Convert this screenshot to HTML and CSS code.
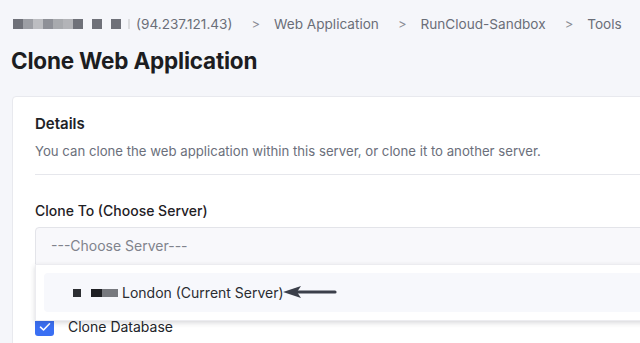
FILE: index.html
```html
<html>
<head>
<link rel="stylesheet" href="styles.css">
</head>
<body>
	<div class="crumbs">
		<span class="redact">
			<i class="px d1"></i><i class="px d2"></i><i class="px d3"></i><i class="px d4"></i><i class="px d5"></i><i class="px d6"></i><i class="px d1"></i>
			<i class="px d1 gap"></i><i class="px d1 gap"></i><i class="px bar"></i>
		</span>
		<span>(94.237.121.43)</span>
		<span class="sep">&gt;</span>
		<span>Web Application</span>
		<span class="sep">&gt;</span>
		<span>RunCloud-Sandbox</span>
		<span class="sep">&gt;</span>
		<span>Tools</span>
	</div>

	<h1>Clone Web Application</h1>

	<div class="card">
		<h2>Details</h2>
		<p class="desc">You can clone the web application within this server, or clone it to another server.</p>
		<hr>

		<label class="field">Clone To (Choose Server)</label>
		<div class="select-wrap">
			<div class="select">---Choose Server---</div>
			<div class="dropdown">
				<div class="option">
					<span class="redact small">
						<i class="px k1"></i><i class="px k2 wide"></i>
					</span>
					<span>London (Current Server)</span>
				</div>
			</div>
			<svg class="pointer" width="56" height="16" viewBox="0 0 56 16">
				<path d="M14 8 H53" stroke="#3b3f4a" stroke-width="3.2" stroke-linecap="round"/>
				<path d="M1 8 L19 2 L15 8 L19 14 Z" fill="#3b3f4a"/>
			</svg>
		</div>

		<div class="check-row">
			<span class="checkbox">
				<svg width="12" height="10" viewBox="0 0 12 10"><path d="M1.5 5.2 L4.5 8 L10.5 1.8" fill="none" stroke="#fff" stroke-width="1.6" stroke-linecap="round" stroke-linejoin="round"/></svg>
			</span>
			<span>Clone Database</span>
		</div>
	</div>
</body>
</html>
```
FILE: styles.css
```css
body {
	margin: 0;
	height: 343px;
	background-color: #f5f6fa;
	font-family: Inter, "Noto Sans", sans-serif;
	color: #1d1f24;
	overflow: hidden;
}

.crumbs {
	display: flex;
	align-items: center;
	padding: 15px 0 0 13px;
	height: 18px;
	font-size: 13.6px;
	color: #6a6e78;
	white-space: nowrap;
}

.crumbs .sep {
	font-size: 13px;
	color: #8a8d95;
	margin: 0 14px 0 19px;
}

.redact {
	display: inline-flex;
	align-items: center;
	margin-right: 6px;
}

.px {
	display: inline-block;
	width: 10px;
	height: 10px;
}

.d1 { background-color: #6f7179; }
.d2 { background-color: #9c9ea4; }
.d3 { background-color: #bcbdc1; }
.d4 { background-color: #8e9097; }
.d5 { background-color: #a8aaae; }
.d6 { background-color: #b3b4b8; }

.gap {
	margin-left: 9px;
}

.bar {
	width: 2px;
	margin-left: 7px;
	background-color: #dcdde0;
}

h1 {
	margin: 14px 0 0 11px;
	font-size: 22.5px;
	font-weight: 700;
	letter-spacing: -0.2px;
	color: #1c1d21;
}

.card {
	margin: 22px -20px 0 12px;
	background-color: #ffffff;
	border: 1px solid #e8e9ee;
	border-radius: 4px;
	padding: 17px 0 0 22px;
	height: 240px;
}

h2 {
	margin: 0;
	font-size: 15px;
	font-weight: 600;
	color: #202226;
}

.desc {
	margin: 10px 0 0 0;
	font-size: 13.2px;
	color: #6b6f7b;
}

hr {
	border: none;
	border-top: 1px solid #e6e7ec;
	margin: 15px 0 0 0;
}

.field {
	display: block;
	margin-top: 27px;
	font-size: 14px;
	font-weight: 500;
	color: #1f2125;
}

.select-wrap {
	position: relative;
	margin-top: 8px;
}

.select {
	height: 36px;
	line-height: 36px;
	border: 1px solid #e3e4e9;
	border-radius: 4px 4px 0 0;
	background-color: #f8f8fb;
	padding-left: 15px;
	font-size: 14px;
	color: #80838c;
}

.dropdown {
	position: absolute;
	left: 0;
	right: 0;
	top: 37px;
	background-color: #ffffff;
	border: 1px solid #ececf0;
	box-shadow: 0 2px 5px rgba(40, 44, 60, 0.18);
	padding: 8px 0 8px 8px;
	z-index: 10;
}

.option {
	display: flex;
	align-items: center;
	height: 39px;
	background-color: #f7f8fc;
	border-radius: 4px;
	padding-left: 29px;
	font-size: 14px;
	color: #2a2c31;
}

.redact.small {
	margin-right: 4px;
}

.k1 {
	width: 8px;
	height: 8px;
	background-color: #2d2f33;
}

.k2 {
	margin-left: 10px;
	height: 8px;
	background: linear-gradient(90deg, #1f2024 0 40%, #77797e 40% 100%);
}

.wide {
	width: 27px;
}

.pointer {
	position: absolute;
	left: 247px;
	top: 57px;
	z-index: 20;
}

.check-row {
	display: flex;
	align-items: center;
	margin-top: 52px;
	font-size: 14px;
	color: #22242a;
}

.checkbox {
	display: inline-flex;
	align-items: center;
	justify-content: center;
	width: 19px;
	height: 19px;
	border-radius: 3px;
	background-color: #3a6ff3;
	margin-right: 14px;
}
```
